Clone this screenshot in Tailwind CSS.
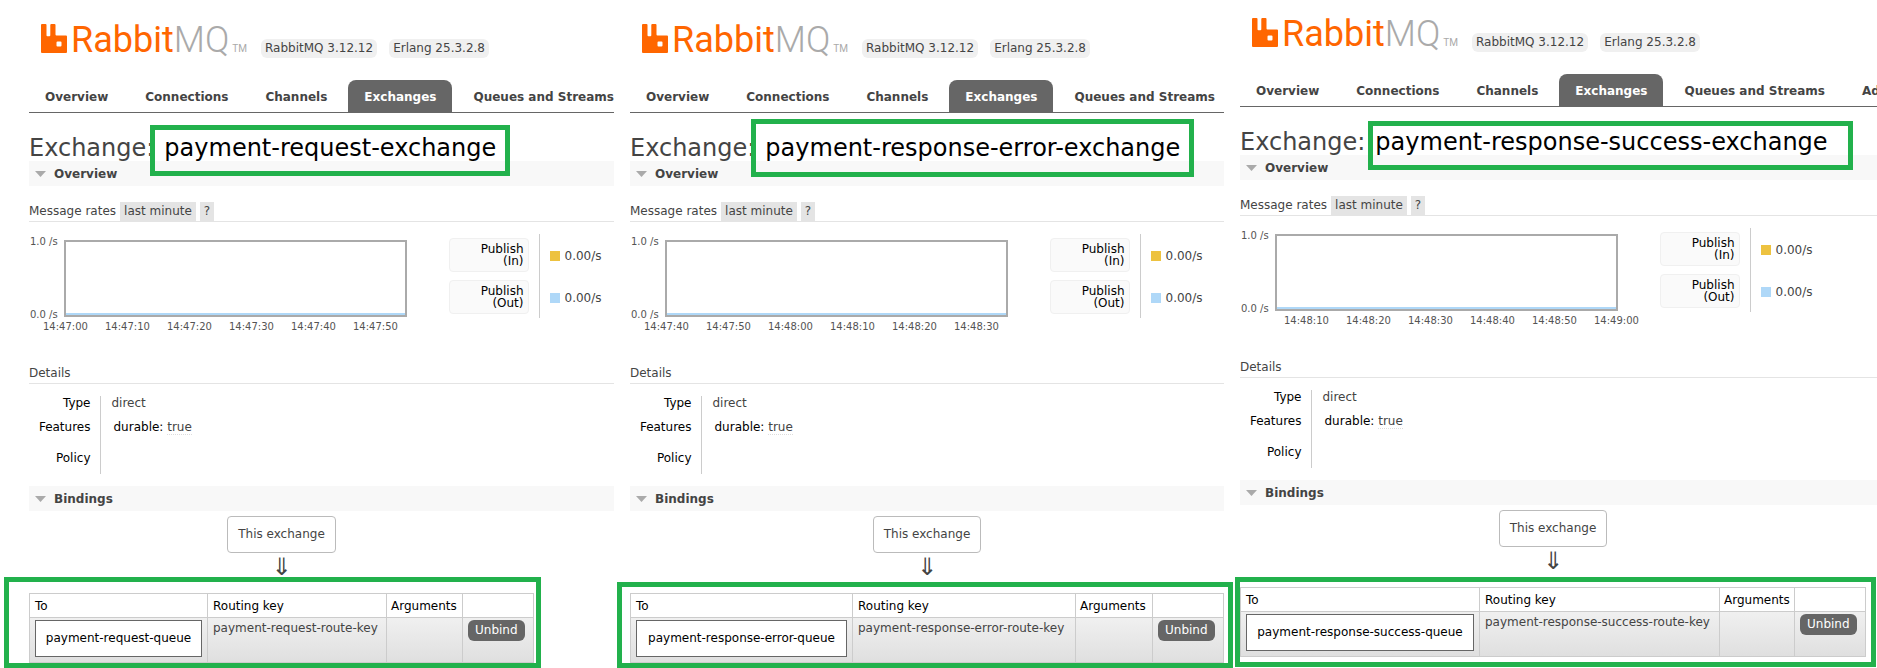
<!DOCTYPE html>
<html lang="en">
<head>
<meta charset="utf-8">
<title>RabbitMQ Management</title>
<script src="https://cdn.jsdelivr.net/npm/@tailwindcss/browser@4"></script>
</head>
<body class="min-h-screen bg-white font-['DejaVu_Sans',Verdana,sans-serif] text-xs leading-[18px] text-[#444]">
<main id="panels" class="grid grid-cols-[614fr_610fr_653fr]"></main>

<script>
const panels = [
  {
    id: 'request', root: 'pl-[29px] pt-6', exchange: 'payment-request-exchange',
    nameBox: '-left-[14px] -right-[14px] -top-[9px] h-[51px]',
    tabs: ['Overview', 'Connections', 'Channels', 'Exchanges', 'Queues and Streams'],
    ticksPad: 'pl-[14px]', ticks: ['14:47:00', '14:47:10', '14:47:20', '14:47:30', '14:47:40', '14:47:50'],
    queue: 'payment-request-queue', key: 'payment-request-route-key',
    table: 'w-[505px]', cols: ['w-[178px]', 'w-[179px]', 'w-[76px]', 'w-[71px]'],
    tableBox: '-left-[25px] -right-[7px] -top-4 -bottom-[5px]'
  },
  {
    id: 'error', root: 'pl-4 pt-6', exchange: 'payment-response-error-exchange',
    nameBox: '-left-[14px] -right-[14px] -top-[15px] h-[58px]',
    tabs: ['Overview', 'Connections', 'Channels', 'Exchanges', 'Queues and Streams'],
    ticksPad: 'pl-[14px]', ticks: ['14:47:40', '14:47:50', '14:48:00', '14:48:10', '14:48:20', '14:48:30'],
    queue: 'payment-response-error-queue', key: 'payment-response-error-route-key',
    table: 'w-[594px]', cols: ['w-[222px]', 'w-[223px]', 'w-[77px]', 'w-[71px]'],
    tableBox: '-left-[13px] -right-[9px] -top-[11px] -bottom-[5px]'
  },
  {
    id: 'success', root: 'pl-4 pt-[18px]', exchange: 'payment-response-success-exchange',
    nameBox: '-left-[7px] -right-[25px] -top-[7px] h-[49px]',
    tabs: ['Overview', 'Connections', 'Channels', 'Exchanges', 'Queues and Streams', 'Admin'],
    ticksPad: 'pl-[44px]', ticks: ['14:48:10', '14:48:20', '14:48:30', '14:48:40', '14:48:50', '14:49:00'],
    queue: 'payment-response-success-queue', key: 'payment-response-success-route-key',
    table: 'w-[626px]', cols: ['w-[239px]', 'w-[240px]', 'w-[75px]', 'w-[71px]'],
    tableBox: '-left-[5px] -right-[10px] -top-[10px] -bottom-[10px]'
  }
];

const tab = name => name === 'Exchanges'
  ? `<a href="#" aria-current="page" class="rounded-t-lg bg-[#666] px-4 pt-2 pb-[6px] text-white">${name}</a>`
  : `<a href="#" class="px-4 pt-2 pb-[6px] last:pr-0">${name}</a>`;

const bar = name => `
  <h2 class="bg-[#f8f8f8] font-bold">
    <button type="button" aria-expanded="true" class="flex h-[25px] w-full items-center gap-2 pl-[6px] text-left">
      <svg class="h-[6px] w-[11px]" viewBox="0 0 11 6"><path d="M0 0h11L5.500 6z" fill="#aaa"/></svg>${name}
    </button>
  </h2>`;

const rate = (label, swatch) => `
  <tr class="h-[42px]">
    <th scope="row" class="w-[90px] border-r border-[#ccc] pr-[10px] font-normal">
      <div class="h-[34px] rounded border border-[#f0f0f0] bg-[#fafafa] pt-1 pr-1 text-right leading-3 text-black">Publish<br>(${label})</div>
    </th>
    <td class="pt-px pl-[10px]"><div class="flex items-center gap-[5px]"><i class="size-[10px] ${swatch}"></i>0.00/s</div></td>
  </tr>`;

const detail = (name, row, value) => `
  <tr class="${row} align-top">
    <th scope="row" class="w-[71px] border-r border-[#ccc] pr-[9px] text-right font-normal text-black">${name}</th>
    <td class="pl-[11px]">${value}</td>
  </tr>`;

document.getElementById('panels').innerHTML = panels.map(p => `
<section class="min-w-0 ${p.root}">
  <header class="flex h-[34px] items-end pl-3">
    <a href="#" class="flex h-[34px] w-[204px] items-start" aria-label="RabbitMQ">
      <svg class="h-[29px] w-[26px] shrink-0" viewBox="0 0 26 29"><path fill="#f60" fill-rule="evenodd" d="M1 0h3.500a1 1 0 0 1 1 1v10.300a1 1 0 0 0 1 1h1.800a1 1 0 0 0 1-1V1a1 1 0 0 1 1-1h3.200a1 1 0 0 1 1 1v9.600a1 1 0 0 0 1 1h9.500a1 1 0 0 1 1 1V28a1 1 0 0 1-1 1H1a1 1 0 0 1-1-1V1a1 1 0 0 1 1-1zM16.500 17.500a1 1 0 0 0-1 1v3a1 1 0 0 0 1 1h3a1 1 0 0 0 1-1v-3a1 1 0 0 0-1-1z"/></svg>
      <span class="ml-1 font-[Roboto] text-[36px] leading-8 text-[#f60]">Rabbit<span class="font-light text-[#aaa]">MQ</span></span>
      <span class="mt-5 ml-[3px] font-[Roboto] text-[10px] leading-[10px] text-[#aaa]">TM</span>
    </a>
    <ul class="ml-4 flex gap-3">
      <li class="rounded-md bg-[#f0f0f0] px-1 leading-[19px]">RabbitMQ 3.12.12</li>
      <li class="rounded-md bg-[#f0f0f0] px-1 leading-[19px]">Erlang 25.3.2.8</li>
    </ul>
  </header>

  <nav class="mt-[22px] flex gap-[5px] overflow-hidden border-b border-[#666] font-bold whitespace-nowrap">${p.tabs.map(tab).join('')}</nav>

  <h1 class="mt-[21px] flex h-[27px] gap-[10px] text-2xl leading-7 whitespace-nowrap">Exchange:
    <b class="relative font-normal text-black">${p.exchange}<i class="absolute ${p.nameBox} border-5 border-[#22b14c]"></i></b>
  </h1>
  ${bar('Overview')}

  <h3 class="mt-4 flex items-center border-b border-[#e4e4e4] leading-[19px]">Message rates
    <button type="button" class="ml-1 bg-[#e4e4e4] px-1">last minute</button>
    <button type="button" class="ml-1 bg-[#e4e4e4] px-1">?</button>
  </h3>

  <div class="mt-3 flex h-[106px] items-start">
    <div class="w-[420px] shrink-0 text-[10px] leading-3 text-[#545454]">
      <div class="mt-[6px] flex h-[77px]">
        <div class="flex w-[35px] flex-col justify-between pl-px whitespace-nowrap"><span class="-mt-1">1.0 /s</span><span class="-mb-1">0.0 /s</span></div>
        <div class="flex w-[343px] items-end border-2 border-[#aaa]"><i class="h-[2px] w-full bg-[#afd8f8]"></i></div>
      </div>
      <div class="mt-1 flex gap-[15px] ${p.ticksPad}">${p.ticks.map(t => `<span class="w-[47px] shrink-0">${t}</span>`).join('')}</div>
    </div>
    <table class="border-collapse"><tbody>${rate('In', 'bg-[#edc240]')}${rate('Out', 'bg-[#afd8f8]')}</tbody></table>
  </div>

  <h3 class="mt-6 border-b border-[#e4e4e4] leading-[19px]">Details</h3>
  <table class="mt-3 border-collapse"><tbody>
    ${detail('Type', 'h-[22px] leading-[14px]', 'direct')}
    ${detail('Features', 'h-[31px]', '<span class="pl-[2px] text-black">durable:</span> <abbr class="border-b border-dotted border-[#ddd]">true</abbr>')}
    ${detail('Policy', 'h-[25px]', '')}
  </tbody></table>
  <div class="mt-3">${bar('Bindings')}</div>

  <div class="mt-[5px] ${p.table}">
    <div class="flex flex-col items-center">
      <div class="rounded border border-[#bbb] px-[10px] leading-[35px]">This exchange</div>
      <div class="h-10 text-2xl leading-7">⇓</div>
    </div>
    <div class="relative">
      <table class="w-full table-fixed border-collapse text-left whitespace-nowrap">
        <thead><tr class="h-6 text-black">
          <th class="${p.cols[0]} border border-[#ccc] px-[5px] font-normal">To</th>
          <th class="${p.cols[1]} border border-[#ccc] px-[5px] font-normal">Routing key</th>
          <th class="${p.cols[2]} border border-[#ccc] px-1 font-normal">Arguments</th>
          <th class="${p.cols[3]} border border-[#ccc] px-[5px]"></th>
        </tr></thead>
        <tbody><tr class="h-[45px] bg-linear-to-b from-[#f0f0f0] to-[#dfdfdf] align-top">
          <td class="border border-[#ccc] px-[5px] pt-[2px]"><a href="#" class="block h-[37px] border border-[#666] bg-white text-center leading-[35px] text-black">${p.queue}</a></td>
          <td class="border border-[#ccc] px-[5px] pt-[1px]">${p.key}</td>
          <td class="border border-[#ccc]"></td>
          <td class="border border-[#ccc] px-[5px] pt-[2px]"><button type="button" class="rounded-md bg-[#666] px-[7px] leading-[21px] text-white">Unbind</button></td>
        </tr></tbody>
      </table>
      <i class="pointer-events-none absolute ${p.tableBox} border-5 border-[#22b14c]"></i>
    </div>
  </div>
</section>`).join('');
</script>
</body>
</html>
